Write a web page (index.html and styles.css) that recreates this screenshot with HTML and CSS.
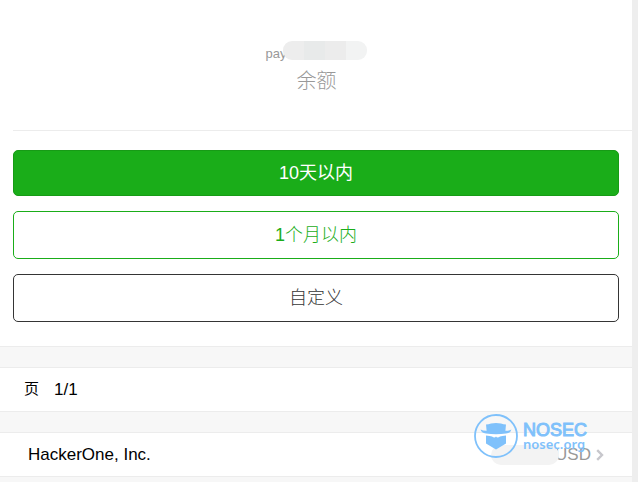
FILE: index.html
```
<!DOCTYPE html>
<html lang="zh-CN">
<head>
    <meta charset="utf-8">
    <meta name="viewport" content="width=device-width, initial-scale=1">
    <link rel="stylesheet" href="styles.css">
    <title>余额</title>
</head>
<body>
    <main class="page">
        <section class="summary">
            <div class="balance">
                <p class="account">pay<span class="account-mask"><i></i><i></i><i></i><i></i></span></p>
                <h1 class="balance-title">余额</h1>
            </div>
            <div class="buttons">
                <button type="button" class="btn btn-primary">10天以内</button>
                <button type="button" class="btn btn-outline">1个月以内</button>
                <button type="button" class="btn btn-dark">自定义</button>
            </div>
        </section>

        <div class="row pager">
            <span class="pager-label">页</span>
            <span>1/1</span>
        </div>

        <a class="row payment" href="#">
            <span>HackerOne, Inc.</span>
            <span class="amount">USD<span class="amount-mask"></span></span>
            <svg class="chevron" width="8" height="12" viewBox="0 0 8 12">
                <path d="M1.2 1.2 6 6 1.2 10.8" fill="none" stroke="#c7c7cc" stroke-width="2.4"/>
            </svg>
        </a>
    </main>

    <div class="watermark">
        <svg width="44" height="44" viewBox="0 0 44 44">
            <circle cx="22" cy="22" r="21" fill="none" stroke="#7fc1fb" stroke-width="1.8"/>
            <g fill="#7fc1fb">
                <path d="M12 10.4Q14.5 10.4 17 9.4Q22 8.6 27 9.4Q29.5 10.4 32 10.4L31.4 16.8Q35 16.8 37.4 15.6Q36.8 19 32 19.6Q22 21 12 19.6Q7.2 19 6.6 15.6Q9 16.8 12.6 16.8Z"/>
                <path d="M12 21.6Q16 22.4 18 22.4Q20.5 24.4 22 22.6Q23.5 24.4 26 22.4Q28 22.4 32 21.6V29.5L22 35.6 12 29.5Z"/>
            </g>
        </svg>
        <div class="watermark-text">
            <span class="watermark-name">NOSEC</span>
            <span class="watermark-site">nosec.org</span>
        </div>
    </div>
</body>
</html>
```
FILE: styles.css
```
* {
    box-sizing: border-box;
}

body {
    margin: 0;
    min-height: 100vh;
    padding-right: 6px;
    background: #eee;
    color: #000;
    font-family: "Liberation Sans", "Noto Sans CJK SC", sans-serif;
    font-size: 17px;
    position: relative;
}

.page {
    min-height: 100vh;
    background: #f7f7f7;
}

.summary {
    padding: 44px 0 24px 13px;
    background: #fff;
    border-bottom: 1px solid #ececec;
}

.balance {
    height: 87px;
    padding-right: 12px;
    border-bottom: 1px solid #ececec;
    text-align: center;
}

.account {
    display: flex;
    justify-content: center;
    margin: 0;
    color: #999;
    font-size: 13px;
    line-height: 20px;
}

/* hides the rest of the account name */
.account-mask {
    display: flex;
    width: 84px;
    height: 19px;
    margin: -3px 0 0 -3px;
    border-radius: 9px;
    overflow: hidden;
}

.account-mask i {
    flex: 1;
    background: #ededed;
}

.account-mask i:nth-child(2) {
    background: #e8eaea;
}

.account-mask i:nth-child(3) {
    background: #ececec;
}

.account-mask i:nth-child(4) {
    background: #f2f3f3;
}

.balance-title {
    margin: 0;
    color: #999;
    font-size: 20px;
    font-weight: 300;
    line-height: 34px;
}

.buttons {
    display: flex;
    flex-direction: column;
    gap: 15px;
    padding: 19px 13px 0 0;
}

.btn {
    width: 100%;
    height: 48px;
    padding: 0 0 4px;
    border: 1px solid #1aad19;
    border-radius: 5px;
    background: #fff;
    font-family: inherit;
    font-size: 18px;
    font-weight: 300;
    cursor: pointer;
}

.btn-primary {
    height: 46px;
    border-color: #179b16;
    background: #1aad19;
    color: #fff;
    font-weight: 400;
}

.btn-outline {
    color: #1aad19;
}

.btn-dark {
    border-color: #353535;
    color: #353535;
}

.row {
    display: flex;
    align-items: center;
    height: 45px;
    margin-top: 20px;
    border: solid #ececec;
    border-width: 1px 0;
    background: #fff;
}

.pager {
    padding: 0 24px;
    gap: 15px;
}

.pager-label {
    padding-bottom: 4px;
    font-size: 15px;
}

.payment {
    padding: 0 28px;
    color: #000;
    text-decoration: none;
}

.amount {
    position: relative;
    margin-left: auto;
    color: #999;
}

.amount-mask {
    position: absolute;
    right: 32px;
    top: 0;
    width: 68px;
    height: 20px;
    border-radius: 10px;
    background: #f3f3f3;
}

.chevron {
    margin-left: 5px;
}

.watermark {
    position: absolute;
    top: 414px;
    right: 51px;
    display: flex;
    gap: 5px;
    color: #7fc1fb;
}

.watermark-text {
    display: flex;
    flex-direction: column;
    padding-top: 6px;
}

.watermark-name {
    font-size: 18px;
    line-height: 20px;
    -webkit-text-stroke: 1px #7fc1fb;
}

.watermark-site {
    font-family: "Noto Sans", sans-serif;
    font-size: 13px;
    font-weight: 600;
    line-height: 8px;
}
```
